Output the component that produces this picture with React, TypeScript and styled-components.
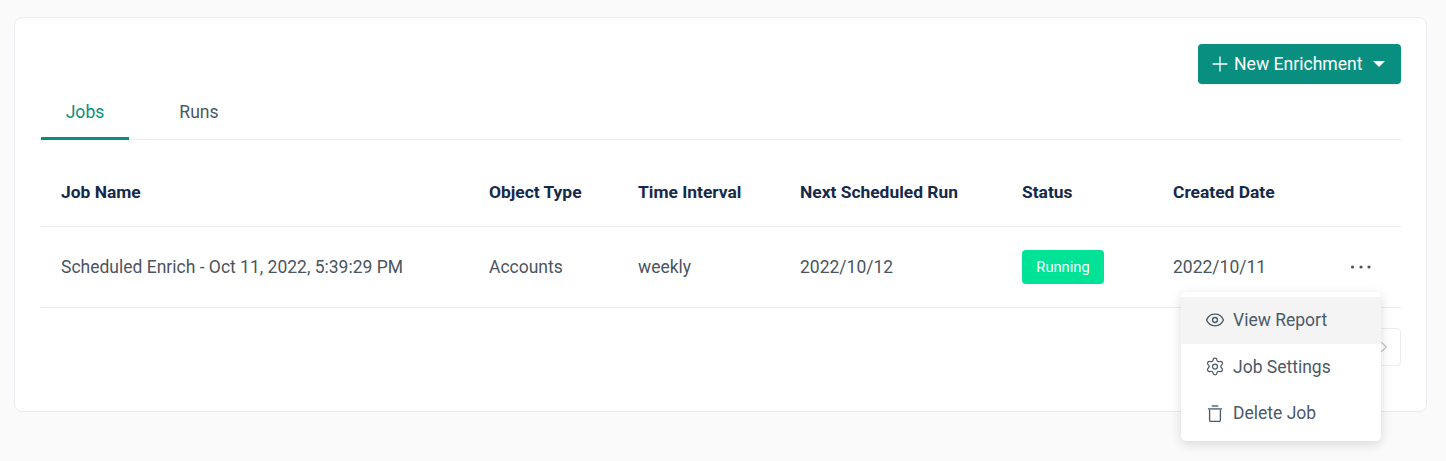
import React from 'react'
import styled, { createGlobalStyle } from 'styled-components'
import { Eye, Settings, Plus, ChevronRight } from 'lucide-react'

const GlobalStyle = createGlobalStyle`
    html, body {
        margin: 0;
        padding: 0;
        background-color: #fafafa;
        font-family: Roboto, "Liberation Sans", sans-serif;
    }
`

const columns = ['Job Name', 'Object Type', 'Time Interval', 'Next Scheduled Run', 'Status', 'Created Date']

const DeleteIcon = () => (
    <svg width="21" height="21" viewBox="0 0 24 24" fill="none" stroke="currentColor" strokeWidth="1.6">
        <path d="M5.5 7.5v12.2a1.8 1.8 0 0 0 1.8 1.8h9.4a1.8 1.8 0 0 0 1.8-1.8V7.5" />
        <path d="M3.5 6.5h17" />
        <path d="M8 3h8" />
    </svg>
)

const DotsIcon = () => (
    <svg width="24" height="24" viewBox="0 0 24 24" fill="currentColor">
        <circle cx="3.5" cy="12" r="1.6" />
        <circle cx="12" cy="12" r="1.6" />
        <circle cx="20" cy="12" r="1.6" />
    </svg>
)

const menuItems = [
    { label: 'View Report', icon: <Eye size={20} strokeWidth={1.6} />, active: true },
    { label: 'Job Settings', icon: <Settings size={21} strokeWidth={1.5} />, active: false },
    { label: 'Delete Job', icon: <DeleteIcon />, active: false },
]

const App = () => {
    return (
        <Page>
            <GlobalStyle />
            <Card>
                <Toolbar>
                    <NewButton>
                        <Plus size={24} strokeWidth={1.3} />
                        <span>New Enrichment</span>
                        <Caret />
                    </NewButton>
                </Toolbar>
                <Tabs>
                    <Tab $active $width={88}>Jobs</Tab>
                    <Tab $width={140}>Runs</Tab>
                </Tabs>
                <HeadRow>
                    {columns.map((c) => (
                        <HeadCell key={c}>{c}</HeadCell>
                    ))}
                </HeadRow>
                <BodyRow>
                    <Cell>Scheduled Enrich - Oct 11, 2022, 5:39:29 PM</Cell>
                    <Cell>Accounts</Cell>
                    <Cell>weekly</Cell>
                    <Cell>2022/10/12</Cell>
                    <Cell>
                        <Badge>Running</Badge>
                    </Cell>
                    <DateCell>
                        2022/10/11
                        <MoreButton>
                            <DotsIcon />
                        </MoreButton>
                    </DateCell>
                </BodyRow>
                <Pagination>
                    <PageButton>
                        <ChevronRight size={18} strokeWidth={1.5} />
                    </PageButton>
                </Pagination>
                <Menu>
                    {menuItems.map(({ label, icon, active }) => (
                        <MenuItem key={label} $active={active}>
                            <IconSlot>{icon}</IconSlot>
                            {label}
                        </MenuItem>
                    ))}
                </Menu>
            </Card>
        </Page>
    )
}

export default App

const Page = styled.div`
    width: 1446px;
    height: 461px;
    padding: 17px 19px 0 14px;
    box-sizing: border-box;
    overflow: hidden;
`

const Card = styled.div`
    position: relative;
    height: 395px;
    box-sizing: border-box;
    padding: 26px 25px 0 26px;
    background-color: #ffffff;
    border: 1px solid #e9ecf1;
    border-radius: 8px;
`

const Toolbar = styled.div`
    display: flex;
    justify-content: flex-end;
`

const NewButton = styled.button`
    display: flex;
    align-items: center;
    width: 203px;
    height: 40px;
    padding: 0 16px 1px 10px;
    box-sizing: border-box;
    border: none;
    border-radius: 4px;
    background-color: #088f80;
    box-shadow: 0 1px 2px rgba(0, 0, 0, 0.08);
    color: #ffffff;
    font-family: inherit;
    font-size: 17.6px;
    font-weight: 400;

    span {
        margin-left: 2px;
    }
`

const Caret = styled.i`
    margin-left: auto;
    margin-top: 1px;
    width: 0;
    height: 0;
    border-left: 6px solid transparent;
    border-right: 6px solid transparent;
    border-top: 6px solid #ffffff;
`

const Tabs = styled.div`
    display: flex;
    height: 56px;
    box-sizing: border-box;
    border-bottom: 1px solid #e9ecf1;
`

const Tab = styled.div<{ $active?: boolean; $width: number }>`
    display: flex;
    align-items: center;
    justify-content: center;
    width: ${(p) => p.$width}px;
    height: 56px;
    padding-top: 3px;
    box-sizing: border-box;
    font-size: 17.6px;
    color: ${(p) => (p.$active ? '#088f80' : '#4a5a64')};
    border-bottom: 3px solid ${(p) => (p.$active ? '#088f80' : 'transparent')};
`

const gridColumns = '428px 149px 162px 222px 151px 1fr'

const HeadRow = styled.div`
    display: grid;
    grid-template-columns: ${gridColumns};
    align-items: center;
    height: 87px;
    box-sizing: border-box;
    border-bottom: 1px solid #e9ecf1;
    padding-top: 18px;
`

const HeadCell = styled.div`
    padding-left: 20px;
    font-size: 17.4px;
    font-weight: 700;
    color: #15294b;
`

const BodyRow = styled.div`
    display: grid;
    grid-template-columns: ${gridColumns};
    align-items: center;
    height: 81px;
    box-sizing: border-box;
    border-bottom: 1px solid #e9ecf1;
`

const Cell = styled.div`
    padding-left: 20px;
    font-size: 17.5px;
    color: #4a5560;
    white-space: nowrap;
`

const DateCell = styled(Cell)`
    display: flex;
    align-items: center;
    justify-content: space-between;
    padding-right: 28px;
`

const Badge = styled.span`
    display: flex;
    align-items: center;
    justify-content: center;
    width: 82px;
    height: 34px;
    border-radius: 4px;
    background-color: #00e396;
    color: #ffffff;
    font-size: 14.7px;
    font-weight: 400;
`

const MoreButton = styled.span`
    display: flex;
    color: #4a5560;
`

const Pagination = styled.div`
    display: flex;
    justify-content: flex-end;
    margin-top: 20px;
`

const PageButton = styled.div`
    display: flex;
    align-items: center;
    justify-content: flex-end;
    width: 40px;
    height: 38px;
    padding-right: 7px;
    box-sizing: border-box;
    border: 1px solid #e9ecf1;
    border-radius: 4px;
    color: #c0c5ca;
`

const Menu = styled.div`
    position: absolute;
    top: 274px;
    left: 1166px;
    width: 200px;
    height: 149px;
    padding-top: 5px;
    box-sizing: border-box;
    background-color: #ffffff;
    border-radius: 5px;
    box-shadow: 0 3px 12px rgba(0, 0, 0, 0.14);
`

const MenuItem = styled.div<{ $active?: boolean }>`
    display: flex;
    align-items: center;
    gap: 8px;
    height: 46.5px;
    padding-left: 24px;
    padding-bottom: 0.5px;
    box-sizing: border-box;
    font-size: 17.5px;
    color: #4a5a68;
    background-color: ${(p) => (p.$active ? '#f4f4f4' : 'transparent')};
`

const IconSlot = styled.span`
    display: flex;
    align-items: center;
    justify-content: center;
    width: 20px;
`
